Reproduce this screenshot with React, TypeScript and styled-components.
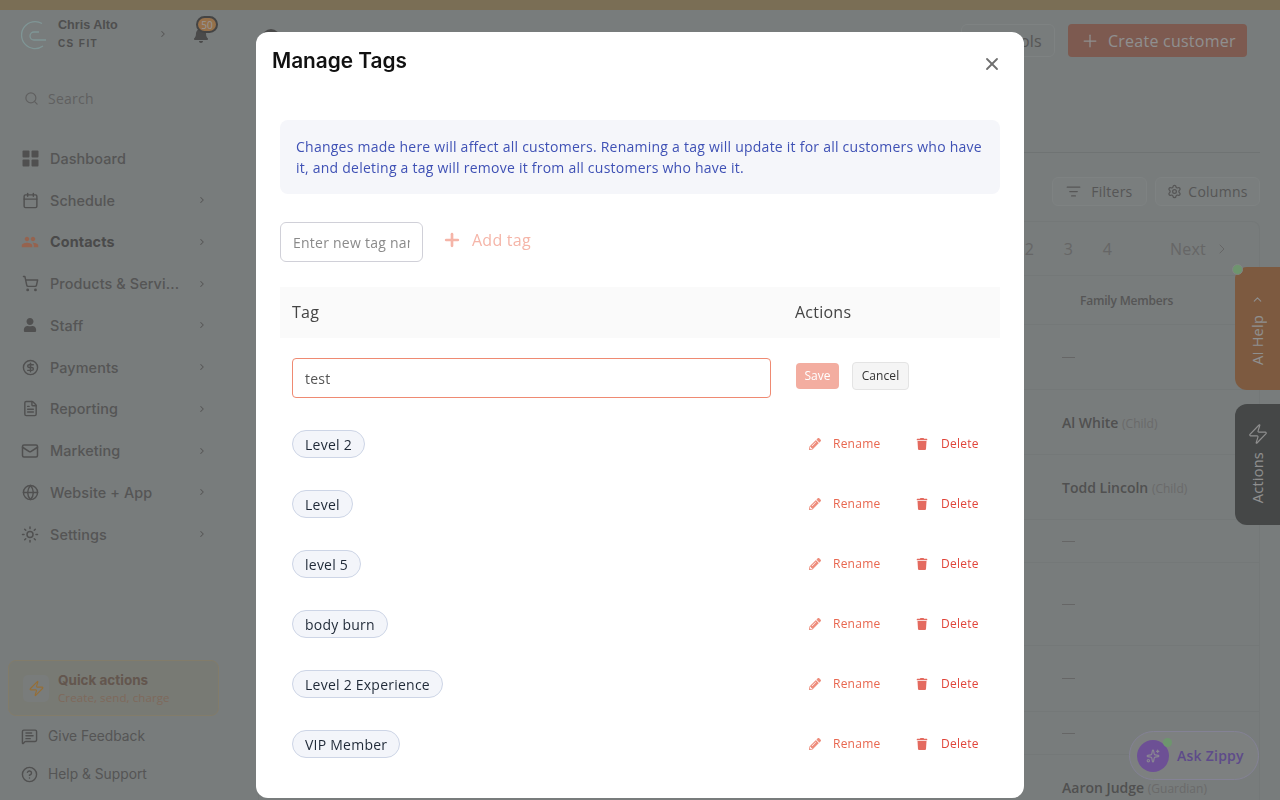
import React from "react";
import styled, { createGlobalStyle } from "styled-components";
import { Search, ChevronRight, ChevronLeft, Calendar, ShoppingCart, CircleDollarSign, FileText, Mail, Globe, Sun, Zap, MessageSquareText, CircleHelp, Plus, ListFilter, Settings, X, Sparkles } from "lucide-react";
import { FaPencilAlt, FaTrash, FaBell, FaUser } from "react-icons/fa";
import { MdPeople } from "react-icons/md";

const Global = createGlobalStyle`
  html, body { margin: 0; padding: 0; height: 100%; overflow: hidden; background: #c4cccc; }
  * { box-sizing: border-box; }
  body { font-family: "Open Sans", sans-serif; letter-spacing: .24px; }
`;

const Page = styled.div`
  width: 1280px; height: 800px; overflow: hidden; position: relative;
  display: flex; flex-direction: column; background: #c4cccc;
`;
const Banner = styled.div`height: 10px; flex: none; background: #c8b07e;`;
const Body = styled.div`flex: 1; display: flex; min-height: 0;`;

const Sidebar = styled.aside`
  width: 229px; flex: none; display: flex; flex-direction: column; padding: 0 9px 0 8px;
`;
const Account = styled.div`
  display: flex; align-items: center; height: 48px; padding-left: 11px; flex: none;
`;
const Logo = styled.svg`width: 30px; height: 30px; flex: none; margin-top: 1px;`;
const AccountText = styled.div`margin-left: 9px; display: flex; flex-direction: column; gap: 5px; width: 100px; font-family: "Liberation Sans", sans-serif; letter-spacing: 0; margin-top: -1px;`;
const AccountName = styled.span`font-size: 12.6px; font-weight: 700; color: #727272; line-height: 15px;`;
const AccountOrg = styled.span`font-size: 10px; font-weight: 700; color: #727272; letter-spacing: 1.4px; line-height: 12px;`;
const BellWrap = styled.div`position: relative; width: 20px; height: 20px; margin-left: 23px; color: #686868; display: flex; align-items: center; justify-content: center; top: 1px;`;
const BellBadge = styled.span`
  position: absolute; left: 5px; top: -9px; width: 22px; height: 17px; border-radius: 9px; background: #ffb468;
  border: 2px solid #5c5c5c; color: #fff; font-size: 10px; letter-spacing: 0; display: flex; align-items: center; justify-content: center;
`;
const SearchBox = styled.div`
  margin: 25px 6px 0 5px; height: 33px; display: flex; align-items: center; gap: 9px; padding: 0 0 2px 11px; flex: none;
  color: #949494; font-size: 14px; border-radius: 6px; background: #c5cdcd;
`;
const Nav = styled.nav`margin-top: 21.6px; display: flex; flex-direction: column; flex: none;`;
const NavItem = styled.div<{ $active?: boolean }>`
  height: 41.75px; flex: none; display: flex; align-items: center; padding: 0 13px; gap: 11px; color: #7e7e7e;
  font-family: Inter, sans-serif; font-size: 14.4px; font-weight: ${(p) => (p.$active ? 700 : 500)}; letter-spacing: .1px;
  ${(p) => p.$active && "color: #686868;"}
`;
const NavIcon = styled.span<{ $color?: string }>`width: 18px; height: 18px; display: flex; align-items: center; justify-content: center; flex: none; color: ${(p) => p.$color || "#747474"};`;
const NavLabel = styled.span`flex: 1; white-space: nowrap; overflow: hidden; text-overflow: ellipsis;`;
const Chevron = styled.span`display: flex; color: #808080;`;
const Spacer = styled.div`flex: 1;`;
const QuickCard = styled.div`
  height: 56px; margin-right: 1px; border: 1px solid #d8cca8; border-radius: 8px; background: #c4c8bc;
  display: flex; align-items: center; padding-left: 14px; gap: 9px;
`;
const QuickIcon = styled.div`width: 26px; height: 27px; border-radius: 5px; background: #c6ccca; display: flex; align-items: center; justify-content: center; color: #ffb040;`;
const QuickText = styled.div`display: flex; flex-direction: column; gap: 1px; letter-spacing: 0;`;
const QuickTitle = styled.span`font-family: Inter, sans-serif; font-size: 13.5px; font-weight: 700; color: #9a8070; line-height: 17px;`;
const QuickSub = styled.span`font-size: 11.5px; color: #d0a68a; line-height: 15px; letter-spacing: .1px;`;
const FootLink = styled.div<{ $gap: number }>`
  display: flex; align-items: center; gap: 10px; padding-left: 13px; height: 20px; margin-top: ${(p) => p.$gap}px;
  color: #7e7e7e; font-family: Inter, sans-serif; font-size: 13.8px; letter-spacing: 0;
`;
const SideFoot = styled.div`display: flex; flex-direction: column; padding-bottom: 16px; flex: none;`;

const Main = styled.main`flex: 1; min-width: 0; padding: 0 20px; display: flex; flex-direction: column;`;
const HeadRow = styled.div`height: 47px; flex: none; margin-top: 14px; display: flex; align-items: flex-start; justify-content: flex-end; gap: 13px;`;
const TitleIcon = styled.div`width: 18px; height: 18px; border-radius: 50%; background: #686868; margin-right: auto; margin-top: 5px; margin-left: 13px;`;
const GhostBtn = styled.div`
  height: 33px; width: 94px; border: 1px solid #d0d8d8; border-radius: 6px; display: flex; align-items: center; justify-content: flex-end; padding-right: 12px;
  font-size: 16px; color: #808080;
`;
const CreateBtn = styled.div`
  height: 33px; width: 179px; margin-right: 13px; border-radius: 4px; background: #ce8874; color: #f2f2f2; font-size: 16px;
  display: flex; align-items: center; gap: 8px; padding-left: 12px;
`;
const Divider = styled.div`height: 1px; flex: none; background: #b2baba; margin-top: 81px; margin-left: 9px;`;
const Toolbar = styled.div`height: 68px; flex: none; padding-top: 24px; display: flex; justify-content: flex-end; gap: 8px;`;
const ToolBtn = styled.div<{ $w: number }>`
  width: ${(p) => p.$w}px; height: 29px; border: 1px solid #d0d8d8; border-radius: 6px; display: flex; align-items: center; justify-content: center; gap: 6px;
  font-size: 14px; color: #808080; background: #c8d0d0;
`;
const Card = styled.div`margin-left: 9px; border: 1px solid #bcc4c4; border-bottom: 0; border-radius: 8px 8px 0 0; flex: 1; min-height: 0;`;
const Pager = styled.div`height: 54px; display: flex; align-items: center; justify-content: flex-end; border-bottom: 1px solid #bcc4c4; padding-right: 29px; color: #a0a0a0; font-size: 16px;`;
const PageNo = styled.span`width: 39px; text-align: center; position: relative; left: 1px;`;
const NextBtn = styled.span`display: flex; align-items: center; gap: 8px; margin-left: 44px;`;
const Row = styled.div<{ $h: number }>`
  height: ${(p) => p.$h}px; display: flex; align-items: center; justify-content: flex-end; border-bottom: 1px solid #bcc4c4;
`;
const Cell = styled.div`width: 197px; font-size: 14px; color: #747474; font-weight: 600; letter-spacing: 0;`;
const HeadCell = styled(Cell)`padding-left: 18px; font-size: 12px; color: #808080; letter-spacing: -.2px;`;
const Dash = styled.div`width: 13px; height: 1px; background: #a0a0a0;`;
const Relation = styled.span`font-size: 12px; font-weight: 400; color: #a8a8a8;`;

const SideTab = styled.div<{ $top: number; $h: number; $bg: string }>`
  position: absolute; right: 0; top: ${(p) => p.$top}px; height: ${(p) => p.$h}px; width: 45px; background: ${(p) => p.$bg};
  border-radius: 12px 0 0 12px; display: flex; flex-direction: column; align-items: center; color: #f2f2f2;
`;
const TabText = styled.span<{ $mt: number }>`writing-mode: vertical-rl; transform: rotate(180deg); font-size: 14.5px; margin-top: ${(p) => p.$mt}px; line-height: 20px; color: #f2f2f2;`;
const TabIcon = styled.span<{ $mt: number }>`display: flex; margin-top: ${(p) => p.$mt}px;`;
const GreenDot = styled.span`position: absolute; left: -3px; top: -3px; width: 11px; height: 11px; background: #b0ffb0; border-radius: 50%; border: 1px solid #d8dede;`;
const Zippy = styled.div`
  position: absolute; left: 1129px; top: 731px; width: 130px; height: 49px; border-radius: 25px; background: #ced4d4; border: 1px solid #dcd8ff;
  display: flex; align-items: center; padding-left: 7px; gap: 8px; color: #906ae8; font-size: 14px; font-weight: 600;
`;
const ZippyBall = styled.span`position: relative; width: 32px; height: 32px; border-radius: 50%; background: #ae74ff; display: flex; align-items: center; justify-content: center; color: #e8e0f8;`;
const ZippyDot = styled.span`position: absolute; right: -3px; top: -2px; width: 9px; height: 9px; border-radius: 50%; background: #b0ffb0;`;

const Overlay = styled.div`
  position: fixed; inset: 0; background: rgba(44,44,44,.5); backdrop-filter: blur(.5px);
  display: flex; justify-content: center; align-items: flex-start; padding-top: 32px;
`;
const Modal = styled.div`
  width: 768px; height: 766px; background: #fff; border-radius: 12px; overflow: hidden; position: relative;
  padding: 0 24px;
`;
const ModalTitle = styled.h2`
  margin: 0 0 0 -8px; padding-top: 15px; font-family: Inter, sans-serif; font-weight: 600; font-size: 20.8px; line-height: 28px; color: #111; letter-spacing: 0;
`;
const CloseBtn = styled.button`
  position: absolute; right: 22px; top: 22px; width: 20px; height: 20px; padding: 0; border: 0; background: none; color: #6f6f6f; display: flex;
`;
const Info = styled.div`
  margin-top: 45px; height: 74px; padding: 16px; border-radius: 8px; background: #f5f6fa; color: #3f51b5; font-size: 14px; line-height: 21px;
`;
const AddRow = styled.div`margin-top: 28px; display: flex; align-items: center;`;
const NewTag = styled.input`
  width: 143px; height: 40px; border: 1px solid #d0d0d8; border-radius: 6px; padding: 0 12px; font: 14px "Open Sans", sans-serif; letter-spacing: .24px; color: #333; outline: none;
  &::placeholder { color: #8a8a8a; opacity: 1; }
`;
const AddBtn = styled.div`margin-left: 19px; display: flex; align-items: center; gap: 10px; color: #f5b5a8; font-size: 16px; position: relative; top: -2px;`;
const TableHead = styled.div`
  margin-top: 25px; height: 51px; padding-bottom: 2px; display: grid; grid-template-columns: 503px 1fr; align-items: center; background: #fafafa; font-size: 16px; color: #444; padding-left: 12px;
`;
const EditRow = styled.div`height: 76px; display: grid; grid-template-columns: 503px 1fr; padding-left: 12px;`;
const TagInput = styled.input`
  width: 479px; height: 40px; margin-top: 20px; border: 1px solid #ef8a72; border-radius: 4px; padding: 0 12px; font: 14px "Open Sans", sans-serif; letter-spacing: .24px; color: #555; outline: none;
`;
const EditActions = styled.div`display: flex; align-items: center; gap: 13px; padding-left: 1px;`;
const SaveBtn = styled.button`
  width: 43px; height: 26px; padding: 0 0 1px; border: 0; border-radius: 4px; background: #f3ada0; color: #fff; font: 500 12px "Open Sans", sans-serif;
`;
const CancelBtn = styled.button`
  width: 57px; height: 28px; padding: 0 0 1px; border: 1px solid #e4e4e4; border-radius: 4px; background: #f5f5f5; color: #333; font: 500 12px "Open Sans", sans-serif; letter-spacing: .1px;
`;
const TagRow = styled.div`height: 60px; display: grid; grid-template-columns: 503px 1fr; align-items: center; padding-left: 12px;`;
const Pill = styled.span`
  justify-self: start; height: 28px; display: inline-flex; align-items: center; padding: 0 12px; border-radius: 14px; border: 1px solid #cdd5e6; background: #f3f5fa;
  color: #1f2937; font-size: 14px;
`;
const Actions = styled.div`display: flex; align-items: center; padding-left: 14px;`;
const ActionLink = styled.span<{ $c: string; $ic: string; $w: number; $gap: number }>`
  width: ${(p) => p.$w}px; display: flex; align-items: center; gap: ${(p) => p.$gap}px; font-size: 12px; line-height: 16px; font-weight: 500; color: ${(p) => p.$c};
  & > svg { color: ${(p) => p.$ic}; flex: none; }
`;

const DashIcon = () => (
  <svg width="17" height="17" viewBox="0 0 17 17" fill="currentColor"><rect x="0.5" y="0.5" width="7" height="7" rx="1" /><rect x="9.5" y="0.5" width="7" height="7" rx="1" /><rect x="0.5" y="9.5" width="7" height="7" rx="1" /><rect x="9.5" y="9.5" width="7" height="7" rx="1" /></svg>
);

const nav = [
  { label: "Dashboard", icon: <DashIcon />, noChev: true },
  { label: "Schedule", icon: <Calendar size={17} /> },
  { label: "Contacts", icon: <MdPeople size={20} />, active: true, color: "#ff9a72" },
  { label: "Products & Services", icon: <ShoppingCart size={17} /> },
  { label: "Staff", icon: <FaUser size={14} /> },
  { label: "Payments", icon: <CircleDollarSign size={17} /> },
  { label: "Reporting", icon: <FileText size={17} /> },
  { label: "Marketing", icon: <Mail size={18} /> },
  { label: "Website + App", icon: <Globe size={17} /> },
  { label: "Settings", icon: <Sun size={19} /> },
];
const tags = ["Level 2", "Level", "level 5", "body burn", "Level 2 Experience", "VIP Member"];
const rows: { h: number; name?: string; rel?: string }[] = [
  { h: 65 }, { h: 65, name: "Al White", rel: "(Child)" }, { h: 65, name: "Todd Lincoln", rel: "(Child)" }, { h: 43 }, { h: 83 }, { h: 66 }, { h: 43 }, { h: 66, name: "Aaron Judge", rel: "(Guardian)" },
];

export default function App() {
  return (
    <>
      <Global />
      <Page>
        <Banner />
        <Body>
          <Sidebar>
            <Account>
              <Logo viewBox="0 0 30 30" fill="none" stroke="#d2ffff" strokeWidth="1.3">
                <path d="M23 3.5A13.5 13.5 0 1 0 24 26" />
                <path d="M20 12h-5a4 4 0 0 0 0 8h12" />
              </Logo>
              <AccountText>
                <AccountName>Chris Alto</AccountName>
                <AccountOrg>CS FIT</AccountOrg>
              </AccountText>
              <Chevron><ChevronRight size={10} strokeWidth={2.5} /></Chevron>
              <BellWrap>
                <FaBell size={16} />
                <BellBadge>50</BellBadge>
              </BellWrap>
            </Account>
            <SearchBox><Search size={15} />Search</SearchBox>
            <Nav>
              {nav.map((n) => (
                <NavItem key={n.label} $active={n.active}>
                  <NavIcon $color={n.color}>{n.icon}</NavIcon>
                  <NavLabel>{n.label.length > 16 ? "Products & Servi..." : n.label}</NavLabel>
                  {!n.noChev && <Chevron><ChevronRight size={10} strokeWidth={2.5} /></Chevron>}
                </NavItem>
              ))}
            </Nav>
            <Spacer />
            <SideFoot>
              <QuickCard>
                <QuickIcon><Zap size={17} strokeWidth={1.6} /></QuickIcon>
                <QuickText>
                  <QuickTitle>Quick actions</QuickTitle>
                  <QuickSub>Create, send, charge</QuickSub>
                </QuickText>
              </QuickCard>
              <FootLink $gap={10}><MessageSquareText size={17} color="#747474" />Give Feedback</FootLink>
              <FootLink $gap={18}><CircleHelp size={17} color="#747474" />Help &amp; Support</FootLink>
            </SideFoot>
          </Sidebar>
          <Main>
            <HeadRow>
              <TitleIcon />
              <GhostBtn>Tools</GhostBtn>
              <CreateBtn><Plus size={20} strokeWidth={1.5} />Create customer</CreateBtn>
            </HeadRow>
            <Divider />
            <Toolbar>
              <ToolBtn $w={95}><ListFilter size={15} />&nbsp;Filters</ToolBtn>
              <ToolBtn $w={105}><Settings size={15} />Columns</ToolBtn>
            </Toolbar>
            <Card>
              <Pager>
                <PageNo>2</PageNo><PageNo>3</PageNo><PageNo>4</PageNo>
                <NextBtn>Next<ChevronRight size={16} strokeWidth={1.5} /></NextBtn>
              </Pager>
              <Row $h={49}><HeadCell>Family Members</HeadCell></Row>
              {rows.map((r, i) => (
                <Row key={i} $h={r.h}>
                  <Cell>
                    {r.name ? <>{r.name} <Relation>{r.rel}</Relation></> : <Dash />}
                  </Cell>
                </Row>
              ))}
            </Card>
          </Main>
        </Body>
        <SideTab $top={267} $h={123} $bg="#ce8854">
          <GreenDot />
          <TabIcon $mt={26}><ChevronLeft size={13} strokeWidth={2} style={{ transform: "rotate(90deg)" }} /></TabIcon>
          <TabText $mt={9}>AI Help</TabText>
        </SideTab>
        <SideTab $top={404} $h={121} $bg="#5e6262">
          <TabIcon $mt={19}><Zap size={22} strokeWidth={1.3} /></TabIcon>
          <TabText $mt={7}>Actions</TabText>
        </SideTab>
        <Zippy>
          <ZippyBall><Sparkles size={14} /><ZippyDot /></ZippyBall>
          Ask Zippy
        </Zippy>
        <Overlay>
          <Modal>
            <ModalTitle>Manage Tags</ModalTitle>
            <CloseBtn aria-label="Close"><X size={20} strokeWidth={2.2} /></CloseBtn>
            <Info>Changes made here will affect all customers. Renaming a tag will update it for all customers who have it, and deleting a tag will remove it from all customers who have it.</Info>
            <AddRow>
              <NewTag placeholder="Enter new tag name" />
              <AddBtn><Plus size={20} strokeWidth={3.2} />Add tag</AddBtn>
            </AddRow>
            <TableHead><span>Tag</span><span>Actions</span></TableHead>
            <EditRow>
              <TagInput defaultValue="test" />
              <EditActions><SaveBtn>Save</SaveBtn><CancelBtn>Cancel</CancelBtn></EditActions>
            </EditRow>
            {tags.map((t) => (
              <TagRow key={t}>
                <Pill>{t}</Pill>
                <Actions>
                  <ActionLink $c="#e8674f" $ic="#ee8d7c" $w={107} $gap={12}><FaPencilAlt size={12} />Rename</ActionLink>
                  <ActionLink $c="#e0453a" $ic="#e46a5f" $w={90} $gap={13}><FaTrash size={12} />Delete</ActionLink>
                </Actions>
              </TagRow>
            ))}
          </Modal>
        </Overlay>
      </Page>
    </>
  );
}
